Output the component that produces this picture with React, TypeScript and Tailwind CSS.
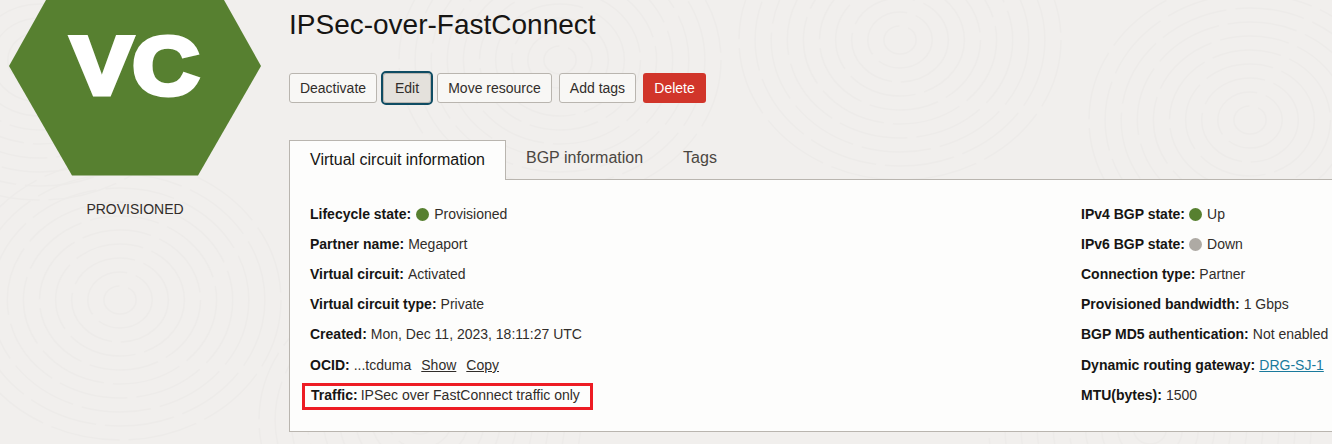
const leftRows = [
  { label: 'Lifecycle state:', value: 'Provisioned', dot: 'bg-[#578030]' },
  { label: 'Partner name:', value: 'Megaport' },
  { label: 'Virtual circuit:', value: 'Activated' },
  { label: 'Virtual circuit type:', value: 'Private' },
  { label: 'Created:', value: 'Mon, Dec 11, 2023, 18:11:27 UTC' },
];

const rightRows = [
  { label: 'IPv4 BGP state:', value: 'Up', dot: 'bg-[#578030]', tight: true },
  { label: 'IPv6 BGP state:', value: 'Down', dot: 'bg-[#aeaaa4]', tight: true },
  { label: 'Connection type:', value: 'Partner' },
  { label: 'Provisioned bandwidth:', value: '1 Gbps' },
  { label: 'BGP MD5 authentication:', value: 'Not enabled' },
];

function Row({ label, value, dot, tight }: { label: string; value: string; dot?: string; tight?: boolean }) {
  return (
    <div className="flex items-center h-[30px] whitespace-nowrap">
      <b className="font-bold">{label}</b>
      {dot && <span className={`${tight ? 'ml-[4px]' : 'ml-[5px]'} w-[13px] h-[13px] rounded-full ${dot}`} />}
      <span className={dot ? 'ml-[5px]' : 'ml-1'}>{value}</span>
    </div>
  );
}

function Swirls() {
  const centers = [
    [560, 60], [120, 300], [900, 40], [1250, 120], [40, 60], [420, 420], [1150, 430],
  ];
  return (
    <svg className="absolute inset-0" width="1332" height="444" fill="none" stroke="#edebe9" strokeWidth="1.5">
      {centers.map(([cx, cy]) =>
        [14, 28, 42, 56, 70, 84, 98, 112, 126, 140].map(r => (
          <ellipse key={`${cx}-${r}`} cx={cx} cy={cy} rx={r * 1.15} ry={r} strokeDasharray="70 9" />
        ))
      )}
    </svg>
  );
}

function Btn({ children, className }: { children: string; className: string }) {
  return (
    <button className={`h-[30px] rounded-[3px] border border-[#b9b5af] bg-[#f8f7f5] text-[14px] text-[#312d2a] ${className}`}>
      {children}
    </button>
  );
}

export default function App() {
  return (
    <div className="relative flex w-[1332px] h-[444px] overflow-hidden bg-[#f1efed] font-['Liberation_Sans',Arial,sans-serif] text-[#161513]">
      <Swirls />

      <div className="relative w-[288px] shrink-0 flex flex-col">
        <div className="relative ml-[9px] w-[252px] h-[176px]">
          <svg width="252" height="176" viewBox="0 0 252 176">
            <polygon points="37,0 215,0 252,66 189,175.5 63,175.5 0,66" fill="#578030" />
          </svg>
          <span className="absolute left-[62px] top-[22px] origin-left scale-x-[1.14] text-[81px] leading-[88px] font-bold text-white [-webkit-text-stroke:5px_white]">
            VC
          </span>
        </div>
        <div className="mt-[25px] ml-[9px] w-[252px] text-center text-[14px] leading-4 text-[#312d2a]">PROVISIONED</div>
      </div>

      <div className="relative flex-1 min-w-0">
        <h1 className="ml-px mt-[9px] text-[28px] leading-[32px]">IPSec-over-FastConnect</h1>

        <div className="flex ml-px mt-[32px]">
          <Btn className="w-[88px]">Deactivate</Btn>
          <Btn className="ml-[6px] w-[48px] !bg-[#e4e1dc] outline-2 outline-[#0f4c63]">Edit</Btn>
          <Btn className="ml-[6px] w-[115px]">Move resource</Btn>
          <Btn className="ml-[7px] w-[77px]">Add tags</Btn>
          <button className="ml-[7px] w-[63px] h-[30px] rounded-[3px] bg-[#d1352a] text-[14px] text-white">Delete</button>
        </div>

        <div className="flex ml-px mt-[37px] h-[39px] text-[16px] text-[#4a4641]">
          <div className="w-[217px] h-[40px] border border-b-0 border-[#b9b5af] bg-[#fdfdfc] text-center leading-[38px] text-[#161513] z-10">
            Virtual circuit information
          </div>
          <div className="ml-[20px] leading-[36px]">BGP information</div>
          <div className="ml-[40px] leading-[36px]">Tags</div>
        </div>

        <div className="flex ml-px w-[1100px] h-[253px] border border-[#b9b5af] bg-[#fdfdfc] pl-[20px] pt-[19px] text-[14px] text-[#312d2a] [&_b]:text-[#161513]">
          <div className="w-[771px] shrink-0">
            {leftRows.map(r => <Row key={r.label} {...r} />)}
            <div className="flex items-center h-[32px] pt-[1px] whitespace-nowrap">
              <b className="font-bold">OCID:</b>
              <span className="ml-1">...tcduma</span>
              <span className="ml-[10px] underline">Show</span>
              <span className="ml-[10px] underline">Copy</span>
            </div>
            <div className="-ml-[8px] flex items-center w-[291px] h-[27px] mt-[2px] border-[3px] border-[#ed1c24] pl-[6px] pb-[2px] whitespace-nowrap">
              <b className="font-bold">Traffic:</b>
              <span className="ml-[3px]">IPSec over FastConnect traffic only</span>
            </div>
          </div>
          <div>
            {rightRows.map(r => <Row key={r.label} {...r} />)}
            <div className="flex items-center h-[31px] pt-[1px] whitespace-nowrap">
              <b className="font-bold">Dynamic routing gateway:</b>
              <span className="ml-1 underline text-[#1a7a9c]">DRG-SJ-1</span>
            </div>
            <Row label="MTU(bytes):" value="1500" />
          </div>
        </div>
      </div>
    </div>
  );
}
